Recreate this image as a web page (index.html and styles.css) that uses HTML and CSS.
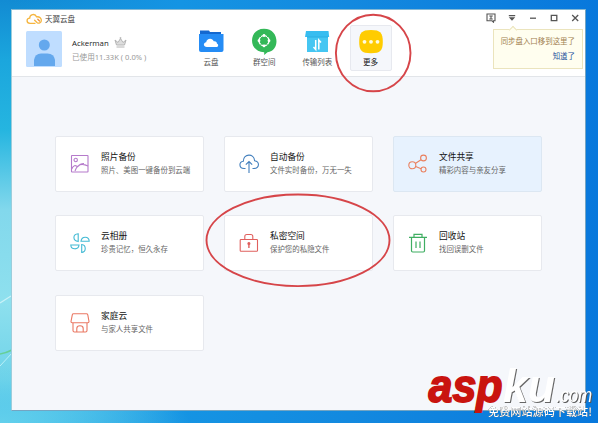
FILE: index.html
```html
<!DOCTYPE html>
<html lang="zh-CN">
<head>
<meta charset="utf-8">
<title>天翼云盘</title>
<link rel="stylesheet" href="styles.css">
</head>
<body>
<div class="desktop">
  <svg class="wallpaper" viewBox="0 0 598 423" fill="none">
    <path d="M0 303 11 296" stroke="#d8f6fa" stroke-width="1.2" opacity=".8"/>
    <path d="M0 354Q6 353 12 350" stroke="#66cf96" stroke-width="1.5"/>
    <path d="M0 366 12 353" stroke="#b9f0f7" stroke-width="1"/>
  </svg>
  <main class="window">
    <header class="header">
      <section class="account">
        <div class="brand">
          <svg width="17" height="12" viewBox="0 0 17 12" fill="none" stroke-width="1.3" stroke-linecap="round"><path d="M9 10.3H4C.2 10.2.1 5.6 3.7 5.2 3.6 1.2 9.1.1 10.5 3.8c3.1-.5 5.2 1.8 4.8 4.1-.3 2-2.5 2.8-4.1 1.8L8.6 7.2" stroke="#f5b53f"/><path d="M11.8 6.2 13.5 8" stroke="#ee9140"/></svg>
          <span>天翼云盘</span>
        </div>
        <div class="profile">
          <svg class="avatar" width="36" height="36" viewBox="0 0 36 36"><rect width="36" height="36" rx="1.5" fill="#bfddff"/><circle cx="18.3" cy="14" r="5.5" fill="#64a8ed"/><path d="M8 35V29q1-6.5 7-6.5h6.500q6.500 0 7.500 6.500V35z" fill="#64a8ed"/></svg>
          <div class="info">
            <div class="name">Ackerman
              <svg width="13" height="11" viewBox="0 0 13 11" fill="none" stroke="#b4b4b4"><path d="m1 3 1.500 5h8L12 3 9 5.500 6.500 1.500 4 5.500z" fill="#ddd"/><path d="M2.500 10h8"/><circle cx="6.500" cy="1" r=".6"/></svg>
            </div>
            <div class="usage">已使用11.33K ( 0.0% )</div>
          </div>
        </div>
      </section>
      <nav class="nav">
        <a class="tab"><svg viewBox="0 0 26 26"><path d="M2 2.500h9l1 1.500h11v6H2z" fill="#1468cf"/><path d="M1 6h24.500v16q0 2-2 2H3q-2 0-2-2z" fill="#258cf5"/><path d="M9 19c-4 0-4-4.500-.8-4.800.3-4.300 6.500-4.700 7.500-1 2.300-.4 3.300 1 3.200 2.200 2.100.8 1.500 3.600-.7 3.600z" fill="#fff"/></svg>云盘</a>
        <a class="tab"><svg viewBox="0 0 26 26"><path d="M13 .8c16 0 16 22.500 3.500 23.400L13.200 27v-2.700C-3 24-3 .8 13 .8z" fill="#34b858"/><circle cx="13" cy="12.700" r="5" fill="none" stroke="#fff" stroke-width="1.300"/><g fill="#fff"><circle cx="13" cy="7.500" r="1.400"/><circle cx="18" cy="12.700" r="1.400"/><circle cx="13" cy="17.900" r="1.400"/><circle cx="8" cy="12.700" r="1.400"/></g><path d="m9 8 1.500 1.500M17 8l-1.500 1.500M9 17.500l1.500-1.500M17 17.500 15.500 16" stroke="#34b858"/></svg>群空间</a>
        <a class="tab"><svg viewBox="0 0 26 26"><path d="M3 8h21v16H3z" fill="#45c6f2"/><path d="M2 3h22.500l.7 6H1z" fill="#37bdf0"/><path d="M3 9h21" stroke="#2baee2"/><path d="M11.700 12v9.500L9.500 19M14.800 21.500V12l2.200 2.500" fill="none" stroke="#fff" stroke-width="1.500"/></svg>传输列表</a>
        <a class="tab active"><svg viewBox="0 0 26 26"><path d="M13 2c9.500 0 11.800 3 11.800 11.700S22.500 25.200 13 25.200 1.200 22.300 1.200 13.700 3.500 2 13 2z" fill="#fc0"/><g fill="#fffbe0"><circle cx="6.500" cy="13.800" r="1.900"/><circle cx="13" cy="13.800" r="1.900"/><circle cx="19.500" cy="13.800" r="1.900"/></g></svg>更多</a>
      </nav>
      <div class="controls">
        <svg width="10" height="10" viewBox="0 0 10 10" fill="none" stroke="#555" stroke-width="1.100"><path d="M1 1h8v6.800H7.500v1.400L6 7.800H1z"/><path d="M3.300 3h3.500M3.300 6h3.500M5 3v3"/></svg>
        <svg width="10" height="10" viewBox="0 0 10 10" fill="#555"><path d="M1.800 2h6.400v1.300H1.800zM1.800 4.300h6.400L5 7.700z"/></svg>
        <svg width="10" height="10" viewBox="0 0 10 10" stroke="#555" stroke-width="1.300"><path d="M2 5.200h6"/></svg>
        <svg width="10" height="10" viewBox="0 0 10 10" fill="none" stroke="#555" stroke-width="1.300"><path d="M2.300 2.300h5.500v5.300H2.300z"/></svg>
        <svg width="10" height="10" viewBox="0 0 10 10" stroke="#555" stroke-width="1.300"><path d="m2.200 2 6 6M8.200 2l-6 6"/></svg>
      </div>
    </header>
    <section class="cards">
      <article class="card"><svg viewBox="0 0 20 20" stroke="#b57acb"><rect x="1.500" y="1.500" width="16.500" height="16.500" rx=".5"/><circle cx="5.700" cy="6" r="1.700"/><path d="M1.700 15Q4 9.500 8 13M5 17q3.500-10 13-5M8 12.500q2-3 6-3"/></svg><div><h2>照片备份</h2><p>照片、美图一键备份到云端</p></div></article>
      <article class="card"><svg viewBox="0 0 20 20" stroke="#427fbd"><path d="M6.500 14.500H5C-.3 14.300-.3 7.700 4.300 7.200 4.500-.8 15-.8 15.600 6.700c5.200.8 5.200 7.500-.6 7.800h-1.500M10 19V7.500M6.800 10.700 10 7.500l3.200 3.200"/></svg><div><h2>自动备份</h2><p>文件实时备份，万无一失</p></div></article>
      <article class="card selected"><svg viewBox="0 0 20 20" stroke="#ea805f"><circle cx="4.300" cy="11.300" r="3.500"/><circle cx="15.500" cy="4" r="2.900"/><circle cx="15.500" cy="15.500" r="2.500"/><path d="m7.300 9.500 5.700-3.800M7.700 12.500l5.400 2.200"/></svg><div><h2>文件共享</h2><p>精彩内容与亲友分享</p></div></article>
      <article class="card"><svg viewBox="0 0 20 20" stroke="#43bad4"><path d="M8.200 8.500V.8C2.500 1.200 2.500 7.700 8.200 8.500zM11 8.200h8.200C19 3 11.800 2.700 11 8.200zM9 12H.8C1 17 8.500 17.200 9 12zM11.700 11.500v8c4.700-.5 4.700-7.500 0-8z"/></svg><div><h2>云相册</h2><p>珍贵记忆，恒久永存</p></div></article>
      <article class="card"><svg viewBox="0 0 20 20" stroke="#e0605e"><rect x="1.200" y="6.500" width="17.300" height="11.800" rx=".8"/><path d="M5.800 6.300V3.500q0-2 2-2h4q2 0 2 2v2.800"/><path d="M9.900 10v5" stroke-width="1.400"/><circle cx="9.900" cy="10.500" r="1" fill="#e0605e"/></svg><div><h2>私密空间</h2><p>保护您的私隐文件</p></div></article>
      <article class="card"><svg viewBox="0 0 20 20" stroke="#3fae62"><path d="M1 4.300h18M6 4V1.300h8V4M3.500 4.500v13.300q0 1.200 1.200 1.200h10.600q1.200 0 1.200-1.200V4.500M8 8.500v6.500M12 8.500v6.500" stroke-width="1.200"/></svg><div><h2>回收站</h2><p>找回误删文件</p></div></article>
      <article class="card"><svg viewBox="0 0 20 20" stroke="#ea7863"><path d="M3.500 .8h13q1 0 1.300 1L19 8.500q0 1.200-1.200 1.200H2.200Q1 9.700 1 8.500l1.300-6.700q.2-1 1.200-1zM3 10v7.500Q3 19 4.500 19h11q1.500 0 1.500-1.500V10M6.800 19v-3.500q0-2.700 3.200-2.700t3.200 2.700V19"/></svg><div><h2>家庭云</h2><p>与家人共享文件</p></div></article>
    </section>
  </main>
  <aside class="tip"><span>同步盘入口移到这里了</span><a>知道了</a></aside>
  <svg class="marks" viewBox="0 0 598 423" fill="none">
    <g stroke="#d64549" stroke-width="1.900"><ellipse cx="373.200" cy="53" rx="37.300" ry="38.300"/><ellipse cx="298" cy="240.300" rx="91.500" ry="45.800"/></g>
    <g class="watermark">
      <text class="mark-red" x="428.500" y="402" textLength="74" lengthAdjust="spacingAndGlyphs">asp</text>
      <text class="mark-white" x="503" y="402" textLength="52" lengthAdjust="spacingAndGlyphs">ku</text>
      <text class="mark-com" x="556" y="402" textLength="36" lengthAdjust="spacingAndGlyphs">.com</text>
      <text class="mark-note" x="488" y="415.500" textLength="104" lengthAdjust="spacingAndGlyphs">免费网站源码下载站!</text>
    </g>
  </svg>
</div>
</body>
</html>
```
FILE: styles.css
```css
* { box-sizing: border-box; }
body {
  margin: 0;
  font-family: "Noto Sans", "Noto Sans CJK SC", sans-serif;
}
.desktop {
  position: relative;
  width: 598px;
  height: 423px;
  padding: 9px 0 0 11px;
  overflow: hidden;
  background:
    radial-gradient(ellipse 190px 60px at 0 423px, #63d0ec, transparent),
    linear-gradient(90deg, #1f9ee200 12px, #1594e3 180px, #1389df 350px, #0878dc 598px),
    linear-gradient(180deg, #128bd3 0, #1ba6dd 60px, #25b5e0 130px, #82d8ec 210px, #8ee0ee 300px, #6fd3e9 380px, #39b8e8 423px);
}
.wallpaper, .marks {
  position: absolute;
  inset: 0;
  width: 598px;
  height: 423px;
  pointer-events: none;
}
.window {
  position: relative;
  width: 575px;
  height: 402px;
  background: #f5f7fb;
  border: 1px solid #74a5c2;
  border-top-color: #83b8d5;
  border-left-color: #9bcddb;
}
.header {
  display: grid;
  grid-template-columns: 178px 1fr auto;
  height: 67px;
  background: #fff;
  border-bottom: 1px solid #e2e5e9;
}
.account { padding: 2px 0 0 14px; }
.brand {
  display: flex;
  align-items: center;
  gap: 2px;
  height: 13px;
  color: #444;
  font-size: 7.500px;
}
.profile {
  display: flex;
  gap: 10px;
  margin-top: 5.500px;
}
.avatar { flex: none; }
.info { padding-top: 5.500px; white-space: nowrap; }
.name {
  display: flex;
  align-items: center;
  gap: 5px;
  height: 13px;
  color: #222;
  font-family: "Open Sans", sans-serif;
  font-size: 7.800px;
}
.usage {
  margin-top: 2px;
  color: #999;
  font-size: 7.600px;
  line-height: 12px;
}
.nav {
  display: flex;
  gap: 11.200px;
  padding-top: 15px;
}
.tab {
  display: flex;
  flex-direction: column;
  align-items: center;
  width: 42px;
  height: 46px;
  padding-top: 2px;
  border: 1px solid transparent;
  border-radius: 2px;
  color: #555;
  font-size: 7.500px;
  line-height: 12px;
  white-space: nowrap;
}
.tab svg { width: 26px; height: 26px; margin-bottom: 2px; overflow: visible; }
.tab.active {
  background: #f5f7fb;
  border-color: #e7e9ef;
  color: #111;
}
.controls {
  display: flex;
  gap: 11px;
  padding: 3px 5px 0 0;
}
.cards {
  display: grid;
  grid-template-columns: repeat(3, 149px);
  grid-auto-rows: 56px;
  gap: 23.500px 20px;
  padding: 58.800px 0 0 43px;
}
.card {
  display: flex;
  align-items: center;
  gap: 11px;
  padding: 0 0 0 14px;
  background: #fff;
  border: 1px solid #e7e9ee;
  border-radius: 2px;
}
.card.selected { background: #e7f2fe; border-color: #dce7f2; }
.card svg { flex: none; width: 20px; height: 20px; fill: none; stroke-width: 1.100; }
.card h2, .card p { margin: 0; font-weight: 400; white-space: nowrap; }
.card h2 { color: #111; font-size: 8.700px; line-height: 13px; }
.card p { color: #666; font-size: 7.450px; line-height: 13px; }
.tip {
  position: absolute;
  left: 493px;
  top: 29px;
  display: flex;
  flex-direction: column;
  align-items: flex-end;
  gap: 3px;
  width: 90px;
  height: 40px;
  padding: 5px 7px;
  background: #fffeef;
  border: 1px solid #ebe4bd;
  color: #a17f50;
  font-size: 7.450px;
  line-height: 12px;
  white-space: nowrap;
}
.tip::before {
  content: "";
  position: absolute;
  left: 15.500px;
  top: -3px;
  width: 5px;
  height: 5px;
  background: #fffeef;
  border: solid #ebe4bd;
  border-width: 1px 0 0 1px;
  transform: rotate(45deg);
}
.tip a { color: #24509c; }
.watermark text { font-family: "Liberation Sans", "Noto Sans CJK SC", sans-serif; }
.watermark .mark-red {
  fill: #c9140f;
  stroke: #c9140f;
  stroke-width: 1.800px;
  font-size: 47px;
  font-style: italic;
  font-weight: 700;
}
.watermark .mark-white {
  fill: #fff;
  font-size: 46px;
  font-style: italic;
  font-weight: 700;
  filter: drop-shadow(1px 1px .6px #666);
}
.watermark .mark-com {
  fill: #fff;
  font-size: 20px;
  font-style: italic;
  filter: drop-shadow(1px 1px .5px #555);
}
.watermark .mark-note {
  fill: #fff;
  font-family: "Noto Sans CJK SC", sans-serif;
  font-size: 11px;
  font-weight: 500;
  filter: drop-shadow(.7px .7px .5px #222);
}
```
